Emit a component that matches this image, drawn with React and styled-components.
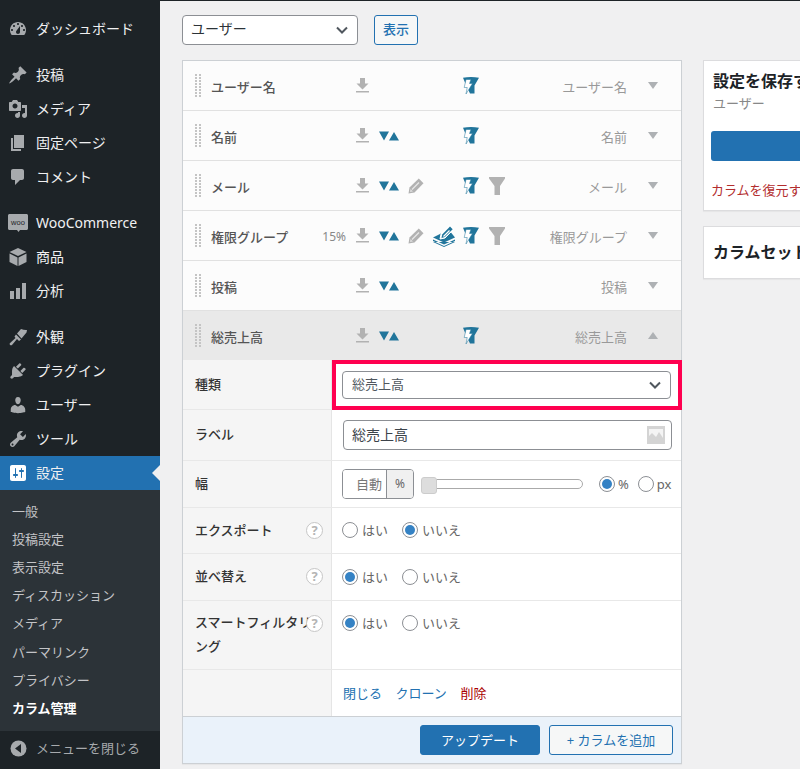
import React from 'react';
import styled, {createGlobalStyle} from 'styled-components';

const BLUE = '#2271b1';
const TEAL = '#21759b';
const GREY_ICON = '#b2b2b2';

const chevron = "url(\"data:image/svg+xml,%3Csvg xmlns='http://www.w3.org/2000/svg' viewBox='0 0 20 20'%3E%3Cpath d='M5 7.5l5 5 5-5' fill='none' stroke='%2350575e' stroke-width='2'/%3E%3C/svg%3E\")";

const GlobalStyle = createGlobalStyle`
    html, body {
        margin: 0;
        padding: 0;
        background: #f0f0f1;
        overflow: hidden;
    }
    * {
        box-sizing: border-box;
    }
    body, select, input, button {
        font-family: "Noto Sans", "Noto Sans CJK JP", sans-serif;
    }
`;

const Page = styled.div`
    width: 800px;
    height: 769px;
    overflow: hidden;
    border-top: 1px solid #1d2327;
    display: flex;
`;

const Sidebar = styled.nav`
    width: 160px;
    flex: none;
    background: #1d2327;
    display: flex;
    flex-direction: column;
    padding-top: 11px;
`;

const MenuItem = styled.div`
    position: relative;
    height: 34px;
    flex: none;
    display: flex;
    align-items: center;
    gap: 8px;
    padding-left: 8px;
    margin-bottom: ${p => (p.$gap ? '12px' : '0')};
    font-size: 14px;
    color: #f0f0f1;
    background: ${p => (p.$current ? BLUE : 'transparent')};
    svg {
        flex: none;
        fill: ${p => (p.$current ? '#fff' : '#a7aaad')};
    }
    ${p => p.$current && `
        &::after {
            content: '';
            position: absolute;
            right: 0;
            top: 9px;
            border: 8px solid transparent;
            border-left-width: 0;
            border-right-color: #f0f0f1;
        }
    `}
`;

const MenuText = styled.span`
    padding-bottom: 2px;
`;

const Submenu = styled.div`
    background: #2c3338;
    height: 241px;
    flex: none;
    padding-top: 6px;
`;

const SubItem = styled.div`
    height: 28.2px;
    display: flex;
    align-items: center;
    padding-left: 12px;
    font-size: 13px;
    color: ${p => (p.$current ? '#fff' : '#c3c4c7')};
    font-weight: ${p => (p.$current ? 700 : 400)};
`;

const CollapseItem = styled.div`
    height: 34px;
    flex: none;
    display: flex;
    align-items: center;
    gap: 9px;
    padding: 0 0 0 10px;
    font-size: 13px;
    color: #a7aaad;
`;

const Main = styled.main`
    flex: 1;
    padding: 13px 0 0 22px;
    display: flex;
    flex-direction: column;
    min-width: 0;
`;

const Toolbar = styled.div`
    display: flex;
    align-items: center;
    gap: 16px;
    height: 31px;
    margin-bottom: 15px;
`;

const TypeSelect = styled.select`
    appearance: none;
    width: ${p => (p.$wide ? '329px' : '176px')};
    height: ${p => (p.$wide ? '28px' : '30px')};
    padding: 0 24px 2px ${p => (p.$wide ? '9px' : '8px')};
    border: 1px solid #8c8f94;
    border-radius: 4px;
    background: #fff ${chevron} no-repeat right 5px center / 20px 20px;
    font-size: ${p => (p.$wide ? '13px' : '14px')};
    color: ${p => (p.$wide ? '#50575e' : '#2c3338')};
`;

const ShowButton = styled.button`
    width: 44px;
    height: 30px;
    padding: 0 0 2px;
    border: 1px solid ${BLUE};
    border-radius: 3px;
    background: #f6f7f7;
    color: ${BLUE};
    font-size: 13px;
    font-weight: 500;
`;

const Columns = styled.div`
    display: flex;
    align-items: flex-start;
    gap: 21px;
`;

const Panel = styled.section`
    width: 500px;
    flex: none;
    border: 1px solid #ccd0d4;
    background: #fff;
    box-shadow: 0 1px 1px rgba(0, 0, 0, .04);
`;

const ColumnRow = styled.div`
    height: ${p => (p.$open ? '49px' : '50px')};
    display: flex;
    align-items: center;
    padding-left: 12px;
    background: ${p => (p.$open ? '#e9e9e9' : '#fcfcfc')};
    border-bottom: ${p => (p.$open ? '0' : '1px solid #e1e1e1')};
`;

const Grip = styled.span`
    width: 6px;
    height: 23px;
    flex: none;
    background-image: radial-gradient(circle at 1px 1px, #c4c4c4 1px, transparent 1.2px);
    background-size: 4px 3px;
`;

const ColumnName = styled.div`
    width: 155px;
    flex: none;
    display: flex;
    justify-content: space-between;
    align-items: center;
    padding: 1px 10px 0 10px;
    font-size: 13px;
    font-weight: 500;
    color: #555;
`;

const Meta = styled.span`
    font-size: 12px;
    font-weight: 400;
    color: #888;
`;

const IconBar = styled.div`
    width: 149px;
    flex: none;
    display: grid;
    grid-template-columns: 23px 29px 25px 30px 26px 16px;
    align-items: center;
`;

const IconSlot = styled.span`
    display: flex;
`;

const ColumnType = styled.div`
    flex: 1;
    padding-top: 1px;
    text-align: right;
    font-size: 13px;
    color: #999;
`;

const Toggle = styled.span`
    width: 54px;
    flex: none;
    display: flex;
    justify-content: center;
    padding-right: 2px;
    &::before {
        content: '';
        border: 5px solid transparent;
        border-bottom: 0;
        border-top: 7px solid #aeb1b4;
        transform: ${p => (p.$open ? 'rotate(180deg)' : 'none')};
    }
`;

const FormRow = styled.div`
    height: ${p => p.$h}px;
    display: grid;
    grid-template-columns: 149px 1fr;
    border-bottom: ${p => (p.$last ? '0' : '1px solid #e8e8e8')};
`;

const FieldLabel = styled.div`
    position: relative;
    display: flex;
    align-items: ${p => (p.$top ? 'flex-start' : 'center')};
    padding: ${p => (p.$top ? '9px' : '0')} 18px ${p => (p.$top ? '0' : '2px')} 12px;
    background: #f5f5f5;
    border-right: 1px solid #e5e5e5;
    font-size: 13px;
    font-weight: 500;
    line-height: 24px;
    color: #333;
`;

const Help = styled.span`
    position: absolute;
    top: 14px;
    right: 8px;
    width: 17px;
    height: 17px;
    border: 1.5px solid #c6c6c6;
    border-radius: 50%;
    background: #fff;
    display: flex;
    align-items: center;
    justify-content: center;
    font-size: 13px;
    font-weight: 700;
    line-height: 1;
    color: #b4b4b4;
`;

const FieldControl = styled.div`
    display: flex;
    align-items: ${p => (p.$top ? 'flex-start' : 'center')};
    padding: ${p => (p.$top ? '14px' : '0')} 10px ${p => (p.$top ? '0' : '1px')} 10px;
`;

const Highlight = styled.div`
    display: flex;
    align-items: center;
    margin: 0 -1px -1px 0;
    padding-left: 6px;
    border: 4px solid #ff0050;
`;

const TextField = styled.div`
    position: relative;
    width: 329px;
    margin-left: 1px;
    input {
        width: 100%;
        height: 30px;
        padding: 0 30px 2px 8px;
        border: 1px solid #8c8f94;
        border-radius: 4px;
        background: #fff;
        font-size: 14px;
        color: #3c434a;
    }
    svg {
        position: absolute;
        top: 6px;
        right: 7px;
    }
`;

const WidthBox = styled.div`
    width: 72px;
    height: 30px;
    flex: none;
    display: flex;
    border: 1px solid #8c8f94;
    border-radius: 4px;
    overflow: hidden;
    font-size: 13px;
    color: #777;
`;

const WidthValue = styled.span`
    flex: 1;
    display: flex;
    align-items: center;
    justify-content: flex-end;
    padding: 0 4px 1px 0;
    background: #fff;
`;

const WidthUnit = styled.span`
    width: 27px;
    display: flex;
    align-items: center;
    justify-content: center;
    border-left: 1px solid #8c8f94;
    background: #f0f0f0;
    font-size: 12px;
    color: #666;
`;

const Slider = styled.div`
    position: relative;
    width: 162px;
    height: 10px;
    flex: none;
    margin: 0 16px 0 7px;
    border: 1px solid #aaa;
    border-radius: 5px;
    background: #fff;
    &::before {
        content: '';
        position: absolute;
        left: -1px;
        top: -3px;
        width: 14px;
        height: 15px;
        border: 1px solid #ccc;
        border-radius: 3px;
        background: #ddd;
    }
`;

const RadioGroup = styled.div`
    display: flex;
    align-items: center;
    gap: ${p => p.$gap || 14}px;
`;

const RadioLabel = styled.label`
    display: flex;
    align-items: center;
    gap: ${p => p.$gap || 4}px;
    font-size: 13px;
    color: #666;
    line-height: 16px;
`;

const Radio = styled.input.attrs({type: 'radio'})`
    appearance: none;
    width: 16px;
    height: 16px;
    flex: none;
    margin: 0;
    border: 1px solid #8c8f94;
    border-radius: 50%;
    background: #fff;
    display: flex;
    align-items: center;
    justify-content: center;
    &:checked::before {
        content: '';
        width: 10px;
        height: 10px;
        border-radius: 50%;
        background: #3582c4;
    }
`;

const ActionLinks = styled.div`
    display: flex;
    gap: 13.5px;
    font-size: 13px;
    margin-left: 1px;
`;

const ActionLink = styled.a`
    color: ${p => (p.$danger ? '#a00' : BLUE)};
    text-decoration: none;
`;

const PanelFooter = styled.div`
    height: 47px;
    display: flex;
    align-items: center;
    justify-content: flex-end;
    gap: 9px;
    padding: 0 8px 0 0;
    background: #eaf2fa;
    border-top: 1px solid #ccd0d4;
`;

const PrimaryButton = styled.button`
    height: 30px;
    width: ${p => p.$w || 120}px;
    padding: 0 0 2px;
    border: 1px solid ${BLUE};
    border-radius: 3px;
    background: ${BLUE};
    color: #fff;
    font-size: 13px;
`;

const SecondaryButton = styled(PrimaryButton)`
    background: #f6f7f7;
    color: ${BLUE};
`;

const SideColumn = styled.aside`
    width: 300px;
    flex: none;
    display: flex;
    flex-direction: column;
    gap: 15px;
`;

const SideBox = styled.div`
    height: ${p => p.$h}px;
    padding: 8px 7px;
    background: #fff;
    border: 1px solid #dcdcde;
    box-shadow: 0 1px 1px rgba(0, 0, 0, .04);
    overflow: hidden;
`;

const SideTitle = styled.h3`
    margin: 0;
    padding: ${p => p.$pad || 0}px 0 0 2px;
    font-size: 16px;
    font-weight: 700;
    line-height: 24px;
    white-space: nowrap;
    color: #1d2327;
`;

const SideNote = styled.div`
    padding-left: 2px;
    font-size: 13px;
    line-height: 20px;
    color: #888;
`;

const SaveButton = styled.div`
    height: 30px;
    margin-top: 18px;
    border-radius: 3px;
    background: ${BLUE};
`;

const RestoreLink = styled.div`
    margin-top: 19px;
    font-size: 13px;
    line-height: 20px;
    white-space: nowrap;
    color: #b32d2e;
`;

const Dash = ({d, size = 20}) => (
    <svg width={size} height={size} viewBox="0 0 20 20"><path fillRule="evenodd" d={d} /></svg>
);

const icons = {
    dashboard: 'M3.76 16h12.48c1.1-1.37 1.76-3.11 1.76-5 0-4.42-3.58-8-8-8s-8 3.58-8 8c0 1.89.66 3.63 1.76 5zM10 4c.55 0 1 .45 1 1s-.45 1-1 1-1-.45-1-1 .45-1 1-1zM6 6c.55 0 1 .45 1 1s-.45 1-1 1-1-.45-1-1 .45-1 1-1zm8 0c.55 0 1 .45 1 1s-.45 1-1 1-1-.45-1-1 .45-1 1-1zm-5.37 5.55L12 7v6c0 1.1-.9 2-2 2s-2-.9-2-2c0-.57.24-1.08.63-1.45zM4 10c.55 0 1 .45 1 1s-.45 1-1 1-1-.45-1-1 .45-1 1-1zm12 0c.55 0 1 .45 1 1s-.45 1-1 1-1-.45-1-1 .45-1 1-1z',
    post: 'M10.44 3.02l1.82-1.82 6.36 6.35-1.83 1.82c-1.05-.68-2.48-.57-3.41.36l-.75.75c-.92.93-1.04 2.35-.35 3.41l-1.83 1.82-2.41-2.41-2.8 2.79c-.42.42-3.38 2.71-3.8 2.29s1.86-3.39 2.28-3.81l2.79-2.79L4.1 9.36l1.83-1.82c1.05.69 2.48.57 3.4-.36l.75-.75c.93-.92 1.05-2.35.36-3.41z',
    media: 'M13 11V4c0-.55-.45-1-1-1h-1.67L9 1H5L3.67 3H2c-.55 0-1 .45-1 1v7c0 .55.45 1 1 1h10c.55 0 1-.45 1-1zM7 4.5c1.38 0 2.5 1.12 2.5 2.5S8.38 9.5 7 9.5 4.5 8.38 4.5 7 5.62 4.5 7 4.5zM14 6h5v10.5c0 1.38-1.12 2.5-2.5 2.5S14 17.88 14 16.5s1.12-2.5 2.5-2.5c.17 0 .34.02.5.05V9h-3V6zm-4 8.05V13h2v3.5c0 1.38-1.12 2.5-2.5 2.5S7 17.88 7 16.5 8.12 14 9.5 14c.17 0 .34.02.5.05z',
    page: 'M6 15V2h10v13H6zm-1 1h8v2H3V5h2v11z',
    comment: 'M5 2h9c1.1 0 2 .9 2 2v7c0 1.1-.9 2-2 2h-2l-5 5v-5H5c-1.1 0-2-.9-2-2V4c0-1.1.9-2 2-2z',
    product: 'M10 1l8.5 4L10 9 1.5 5zM1.5 6.5l8 4V19l-8-4zM18.5 6.5v8.5l-8 4v-8.5z',
    chart: 'M18 18V2h-4v16h4zm-6 0V7H8v11h4zm-6 0v-8H2v8h4z',
    brush: 'M9 6.5L13 2c2 .8 4 1.2 6 1l-.5 2.5L13.5 11.5zM8 7.5l5 5-2 1.5-2-2-5 6c-1 1-3-.5-2.2-1.8L7.5 11 6.5 9.5z',
    plugin: 'M13.11 4.36L9.87 7.6 8 5.73l3.24-3.24c.35-.34 1.05-.2 1.56.32.52.51.66 1.21.31 1.55zm-8 1.77l.91-1.12 9.01 9.01-1.19.84c-.71.71-2.63 1.16-3.82 1.16H6.14L4.9 17.26c-.59.59-1.54.59-2.12 0-.59-.58-.59-1.53 0-2.12l1.24-1.24v-3.88c0-1.13.4-3.19 1.09-3.89zm7.26 3.97l3.24-3.24c.34-.35 1.04-.21 1.55.31.52.51.66 1.21.31 1.55l-3.24 3.25z',
    users: 'M10 9.25c-2.27 0-2.73-3.44-2.73-3.44C7 4.02 7.82 2 9.97 2c2.16 0 2.98 2.02 2.71 3.81 0 0-.41 3.44-2.68 3.44zm0 2.57L12.72 10c2.39 0 4.52 2.33 4.52 4.53v2.49s-3.65 1.13-7.24 1.13c-3.65 0-7.24-1.13-7.24-1.13v-2.49c0-2.25 1.94-4.48 4.47-4.48z',
    tools: 'M16.68 9.77c-1.34 1.34-3.3 1.67-4.95.99l-5.41 6.52c-.99.99-2.59.99-3.58 0s-.99-2.59 0-3.57l6.52-5.42c-.68-1.65-.35-3.61.99-4.95 1.28-1.28 3.12-1.62 4.72-1.06l-2.89 2.89 2.82 2.82 2.86-2.87c.53 1.58.18 3.39-1.08 4.65zM3.81 16.21c.4.39 1.04.39 1.43 0 .4-.4.4-1.04 0-1.43-.39-.4-1.03-.4-1.43 0-.39.39-.39 1.03 0 1.43z',
    settings: 'M18 16V4c0-1.1-.9-2-2-2H4c-1.1 0-2 .9-2 2v12c0 1.1.9 2 2 2h12c1.1 0 2-.9 2-2zM8 11h1c.55 0 1 .45 1 1s-.45 1-1 1H8v1.5c0 .28-.22.5-.5.5s-.5-.22-.5-.5V13H6c-.55 0-1-.45-1-1s.45-1 1-1h1V5.5c0-.28.22-.5.5-.5s.5.22.5.5V11zm5-2h-1c-.55 0-1-.45-1-1s.45-1 1-1h1V5.5c0-.28.22-.5.5-.5s.5.22.5.5V7h1c.55 0 1 .45 1 1s-.45 1-1 1h-1v5.5c0 .28-.22.5-.5.5s-.5-.22-.5-.5V9z',
};

const WooIcon = () => (
    <svg width="20" height="20" viewBox="0 0 20 20">
        <path d="M1.5 1h17c.8 0 1.5.7 1.5 1.5v13c0 .8-.7 1.5-1.5 1.5H12l-1.5 2L9 17H1.5C.7 17 0 16.300 0 15.500v-13C0 1.700.7 1 1.500 1z" />
        <text x="10" y="11.500" textAnchor="middle" fontSize="7.500" fontFamily="Liberation Sans, sans-serif" style={{fill: '#1d2327'}}>woo</text>
    </svg>
);

const DownloadIcon = () => (
    <svg width="13" height="15" viewBox="0 0 13 15" fill={GREY_ICON}>
        <path d="M4 0h5v5.500h3.500L6.500 11.500.5 5.500H4zM0 13h13v1.500H0z" />
    </svg>
);

const SortIcon = () => (
    <svg width="20" height="10" viewBox="0 0 20 10" fill={TEAL}>
        <path d="M0 .5h10L5 9.500zM10 9.500l5-8.500 5 8.500z" />
    </svg>
);

const EditIcon = () => (
    <svg width="16" height="16" viewBox="0 0 16 16">
        <path d="M.5 15.500L1.500 9.500 10.800.5l4.700 4.700L6.500 14.500z" fill={GREY_ICON} />
        <path d="M4 11.500L11 4.500" stroke="#e8e8e8" strokeWidth="1.200" />
        <path d="M2 14l.5-3 2.500 2.500z" fill="#ddd" />
    </svg>
);

const BulkEditIcon = () => (
    <svg width="22" height="23" viewBox="0 0 22 23">
        <path d="M0 13.500L8 9.500l4 2 6-3 4 5-11 5z" fill={TEAL} />
        <path d="M0 15.500l11 5 11-5v1.500l-11 5-11-5zM0 18l11 5 11-5" fill={TEAL} />
        <path d="M7 15l1-5L17 1l4 4-9 9z" fill="#fff" stroke="#fff" strokeWidth="1" />
        <path d="M8.500 14l.7-3.500L17 2.500l2.700 2.700-7.800 7.800z" fill={TEAL} />
        <path d="M10.500 12.500L16.500 6.500" stroke="#fff" strokeWidth="1.300" />
    </svg>
);

const SmartFilterIcon = () => (
    <svg width="16" height="17" viewBox="0 0 16 17">
        <path d="M0 .8C5 -.2 11 -.2 16 .8L11.500 8.500V16.500H7L3 8z" fill={TEAL} />
        <path d="M3 2.500H8L6.500 6.500H9.500L3 17 4.200 10.500H1.200z" fill="#fff" stroke={TEAL} strokeWidth=".5" />
    </svg>
);

const FilterIcon = () => (
    <svg width="16" height="18" viewBox="0 0 16 18" fill={GREY_ICON}>
        <path d="M0 0h16v1.500L11 9v9H5.500V9L0 1.500z" />
    </svg>
);

const ImageIcon = () => (
    <svg width="18" height="18" viewBox="0 0 18 18">
        <rect width="18" height="18" fill="#d4d4d4" />
        <rect x="2" y="3" width="14" height="12" fill="#f4f4f4" />
        <path d="M2 15v-5l3-3 4 4 3-5 4 6v3z" fill="#d4d4d4" />
    </svg>
);

const CollapseIcon = () => (
    <svg width="17" height="17" viewBox="0 0 17 17">
        <circle cx="8.500" cy="8.500" r="8" fill="#a7aaad" />
        <path d="M11 4v9L5 8.500z" fill="#1d2327" />
    </svg>
);

const menu = [
    {label: 'ダッシュボード', icon: 'dashboard', gap: true},
    {label: '投稿', icon: 'post'},
    {label: 'メディア', icon: 'media'},
    {label: '固定ページ', icon: 'page'},
    {label: 'コメント', icon: 'comment', gap: true},
    {label: 'WooCommerce', woo: true},
    {label: '商品', icon: 'product'},
    {label: '分析', icon: 'chart', gap: true},
    {label: '外観', icon: 'brush'},
    {label: 'プラグイン', icon: 'plugin'},
    {label: 'ユーザー', icon: 'users'},
    {label: 'ツール', icon: 'tools'},
    {label: '設定', icon: 'settings', current: true},
];

const submenu = ['一般', '投稿設定', '表示設定', 'ディスカッション', 'メディア', 'パーマリンク', 'プライバシー'];

const columns = [
    {name: 'ユーザー名', type: 'ユーザー名', icons: ['download', null, null, null, 'smart', null]},
    {name: '名前', type: '名前', icons: ['download', 'sort', null, null, 'smart', null]},
    {name: 'メール', type: 'メール', icons: ['download', 'sort', 'edit', null, 'smart', 'filter']},
    {name: '権限グループ', type: '権限グループ', meta: '15%', icons: ['download', 'sort', 'edit', 'bulk', 'smart', 'filter']},
    {name: '投稿', type: '投稿', icons: ['download', 'sort', null, null, null, null]},
];

const columnIcons = {
    download: <DownloadIcon />,
    sort: <SortIcon />,
    edit: <EditIcon />,
    bulk: <BulkEditIcon />,
    smart: <SmartFilterIcon />,
    filter: <FilterIcon />,
};

const Column = ({name, type, meta, icons: slots, open}) => (
    <ColumnRow $open={open}>
        <Grip />
        <ColumnName>{name}{meta && <Meta>{meta}</Meta>}</ColumnName>
        <IconBar>
            {slots.map((icon, i) => <IconSlot key={i}>{icon && columnIcons[icon]}</IconSlot>)}
        </IconBar>
        <ColumnType>{type}</ColumnType>
        <Toggle $open={open} />
    </ColumnRow>
);

const YesNo = ({name, yes}) => (
    <RadioGroup>
        <RadioLabel><Radio name={name} defaultChecked={yes} />はい</RadioLabel>
        <RadioLabel><Radio name={name} defaultChecked={!yes} />いいえ</RadioLabel>
    </RadioGroup>
);

export default function App() {
    return (
        <Page>
            <GlobalStyle />
            <Sidebar>
                {menu.map(item => (
                    <MenuItem key={item.label} $gap={item.gap} $current={item.current}>
                        {item.woo ? <WooIcon /> : <Dash d={icons[item.icon]} />}
                        <MenuText>{item.label}</MenuText>
                    </MenuItem>
                ))}
                <Submenu>
                    {submenu.map(label => <SubItem key={label}>{label}</SubItem>)}
                    <SubItem $current>カラム管理</SubItem>
                </Submenu>
                <CollapseItem><CollapseIcon /><MenuText>メニューを閉じる</MenuText></CollapseItem>
            </Sidebar>
            <Main>
                <Toolbar>
                    <TypeSelect defaultValue="user"><option value="user">ユーザー</option></TypeSelect>
                    <ShowButton>表示</ShowButton>
                </Toolbar>
                <Columns>
                    <Panel>
                        {columns.map(col => <Column key={col.name} {...col} />)}
                        <Column open name="総売上高" type="総売上高" icons={['download', 'sort', null, null, 'smart', null]} />
                        <FormRow $h={50}>
                            <FieldLabel>種類</FieldLabel>
                            <Highlight>
                                <TypeSelect $wide defaultValue="sales"><option value="sales">総売上高</option></TypeSelect>
                            </Highlight>
                        </FormRow>
                        <FormRow $h={51}>
                            <FieldLabel>ラベル</FieldLabel>
                            <FieldControl>
                                <TextField>
                                    <input defaultValue="総売上高" />
                                    <ImageIcon />
                                </TextField>
                            </FieldControl>
                        </FormRow>
                        <FormRow $h={47}>
                            <FieldLabel>幅</FieldLabel>
                            <FieldControl>
                                <WidthBox>
                                    <WidthValue>自動</WidthValue>
                                    <WidthUnit>%</WidthUnit>
                                </WidthBox>
                                <Slider />
                                <RadioGroup $gap={9}>
                                    <RadioLabel $gap={3}><Radio name="unit" defaultChecked />%</RadioLabel>
                                    <RadioLabel $gap={3}><Radio name="unit" />px</RadioLabel>
                                </RadioGroup>
                            </FieldControl>
                        </FormRow>
                        <FormRow $h={46}>
                            <FieldLabel>エクスポート<Help>?</Help></FieldLabel>
                            <FieldControl><YesNo name="export" /></FieldControl>
                        </FormRow>
                        <FormRow $h={47}>
                            <FieldLabel>並べ替え<Help>?</Help></FieldLabel>
                            <FieldControl><YesNo name="sort" yes /></FieldControl>
                        </FormRow>
                        <FormRow $h={69}>
                            <FieldLabel $top>スマートフィルタリング<Help>?</Help></FieldLabel>
                            <FieldControl $top><YesNo name="smart" yes /></FieldControl>
                        </FormRow>
                        <FormRow $h={46} $last>
                            <FieldLabel />
                            <FieldControl>
                                <ActionLinks>
                                    <ActionLink href="#">閉じる</ActionLink>
                                    <ActionLink href="#">クローン</ActionLink>
                                    <ActionLink href="#" $danger>削除</ActionLink>
                                </ActionLinks>
                            </FieldControl>
                        </FormRow>
                        <PanelFooter>
                            <PrimaryButton>アップデート</PrimaryButton>
                            <SecondaryButton $w={124}>+ カラムを追加</SecondaryButton>
                        </PanelFooter>
                    </Panel>
                    <SideColumn>
                        <SideBox $h={151}>
                            <SideTitle>設定を保存する</SideTitle>
                            <SideNote>ユーザー</SideNote>
                            <SaveButton />
                            <RestoreLink>カラムを復元する</RestoreLink>
                        </SideBox>
                        <SideBox $h={53}>
                            <SideTitle $pad={5}>カラムセット</SideTitle>
                        </SideBox>
                    </SideColumn>
                </Columns>
            </Main>
        </Page>
    );
}
